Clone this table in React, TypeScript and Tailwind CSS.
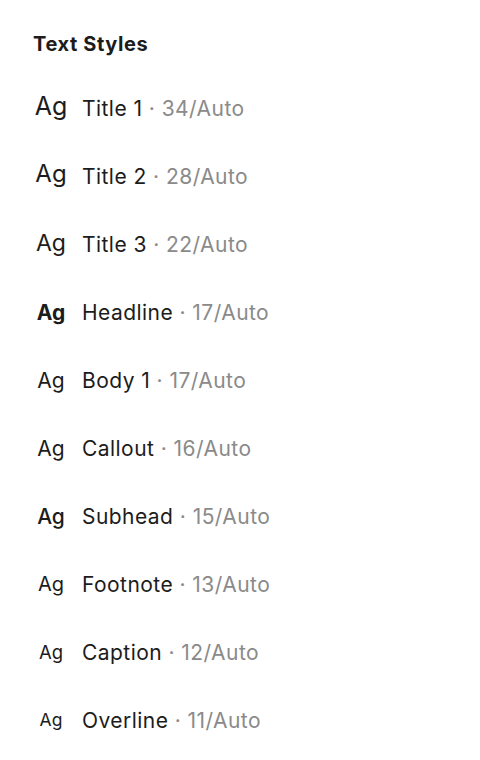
import React from "react";

const rows: { name: string; size: number; ag: string }[] = [
  { name: "Title 1", size: 34, ag: "text-[25px] font-normal -translate-y-[2px]" },
  { name: "Title 2", size: 28, ag: "text-[24px] font-normal -translate-y-[2px]" },
  { name: "Title 3", size: 22, ag: "text-[23px] font-normal -translate-y-[1px]" },
  { name: "Headline", size: 17, ag: "text-[21px] font-bold" },
  { name: "Body 1", size: 17, ag: "text-[21px] font-normal" },
  { name: "Callout", size: 16, ag: "text-[21px] font-normal" },
  { name: "Subhead", size: 15, ag: "text-[21px] font-medium" },
  { name: "Footnote", size: 13, ag: "text-[20px] font-normal" },
  { name: "Caption", size: 12, ag: "text-[18.5px] font-normal" },
  { name: "Overline", size: 11, ag: "text-[17.5px] font-normal" },
];

export default function App() {
  return (
    <div
      className="w-[480px] h-[760px] bg-white text-[#1a1a1a] pl-[33px] pt-[32px]"
      style={{ fontFamily: "Inter, 'Noto Sans', sans-serif" }}
    >
      <div className="text-[20px] font-bold leading-[24px] tracking-[0.6px] text-[#1c1c1c]">Text Styles</div>
      <div className="mt-[18px] flex flex-col">
        {rows.map((r) => (
          <div key={r.name} className="h-[68px] flex items-center">
            <div className={`w-[36px] text-center leading-none text-[#1c1c1c] ${r.ag}`}>Ag</div>
            <div className="ml-[13px] text-[21px] leading-none tracking-[0.45px] whitespace-nowrap">
              <span className="text-[#1c1c1c]">{r.name}</span>
              <span className="text-[#8a8a8a]"> · {r.size}/Auto</span>
            </div>
          </div>
        ))}
      </div>
    </div>
  );
}
